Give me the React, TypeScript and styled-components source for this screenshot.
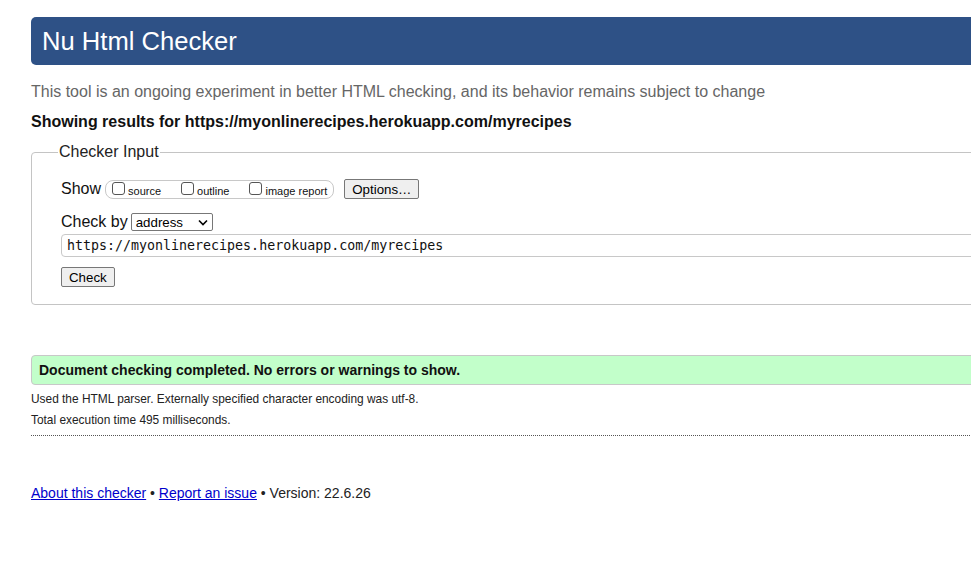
import React from "react";
import styled, { createGlobalStyle } from "styled-components";

const Global = createGlobalStyle`
  html, body { margin: 0; padding: 0; background: #fff; overflow: hidden; }
  body { font-family: "Liberation Sans", Arial, sans-serif; color: #000; }
`;

const Page = styled.div`
  width: 1140px;
  padding: 17px 0 0 31px;
  box-sizing: border-box;
`;

const Header = styled.h1`
  margin: 0;
  height: 48px;
  display: flex;
  align-items: center;
  padding: 0 11px;
  background: #2e5186;
  color: #fff;
  font-size: 25.6px;
  font-weight: normal;
  border-radius: 5px;
  box-sizing: border-box;
`;

const Intro = styled.p`
  margin: 18px 0 0;
  font-size: 16px;
  line-height: 18px;
  color: #666;
`;

const Results = styled.p`
  margin: 12px 0 0;
  font-size: 16px;
  line-height: 18px;
  font-weight: bold;
  color: #111;
`;

const Fieldset = styled.fieldset`
  margin: 12px 0 0;
  padding: 4px 29px 17px;
  border: 1px solid #c4c4c4;
  border-radius: 4px;
`;

const Legend = styled.legend`
  padding: 0 1px;
  margin-left: -3px;
  font-size: 16px;
  color: #222;
`;

const Row = styled.div<{ $mt: number }>`
  display: flex;
  align-items: center;
  gap: 4px;
  margin-top: ${(p) => p.$mt}px;
`;

const Label = styled.span`
  font-size: 16px;
  color: #111;
`;

const ChoiceBox = styled.div`
  display: flex;
  align-items: center;
  gap: 20px;
  height: 19px;
  padding: 0 6px 0 6px;
  border: 1px solid #c8c8c8;
  border-radius: 8px;
  box-sizing: border-box;
`;

const Choice = styled.label`
  display: flex;
  align-items: center;
  font-size: 11px;
  padding-top: 3px;
  color: #111;
`;

const Box = styled.span`
  width: 13px;
  height: 13px;
  border: 1px solid #555;
  border-radius: 3px;
  box-sizing: border-box;
  margin-right: 3px;
  margin-top: -5px;
  background: #fff;
`;

const Button = styled.button<{ $ml?: number }>`
  font-family: "Liberation Sans", Arial, sans-serif;
  font-size: 13.3px;
  height: 20px;
  padding: 0 7px;
  border: 1px solid #777;
  border-radius: 2px;
  background: #efefef;
  color: #000;
  margin-left: ${(p) => p.$ml ?? 0}px;
`;

const Select = styled.div`
  display: flex;
  align-items: center;
  justify-content: space-between;
  width: 82px;
  height: 18px;
  margin-left: -1px;
  padding: 0 4px 0 4px;
  border: 1px solid #777;
  border-radius: 2px;
  box-sizing: border-box;
  font-size: 13.3px;
  color: #000;
`;

const UrlInput = styled.div`
  margin-top: 3px;
  height: 23px;
  display: flex;
  align-items: center;
  padding-left: 5px;
  border: 1px solid #c8c8c8;
  border-radius: 4px;
  box-sizing: border-box;
  font-family: "DejaVu Sans Mono", monospace;
  font-size: 13.3px;
  color: #111;
`;

const Message = styled.div`
  margin-top: 50px;
  height: 30px;
  display: flex;
  align-items: center;
  padding-left: 7px;
  background: #c2ffca;
  border: 1px solid #c8c8c8;
  border-radius: 4px;
  box-sizing: border-box;
  font-size: 14px;
  font-weight: bold;
  color: #111;
`;

const Detail = styled.p<{ $mt: number }>`
  margin: ${(p) => p.$mt}px 0 0;
  font-size: 11.9px;
  line-height: 14px;
  color: #222;
`;

const Rule = styled.hr`
  margin: 8px 0 0;
  border: 0;
  border-top: 1px dotted #555;
`;

const Footer = styled.p`
  margin: 49px 0 0;
  font-size: 14px;
  color: #222;
  a { color: #00c; }
`;

export default function App() {
  return (
    <Page>
      <Global />
      <Header>Nu Html Checker</Header>
      <Intro>This tool is an ongoing experiment in better HTML checking, and its behavior remains subject to change</Intro>
      <Results>Showing results for https://myonlinerecipes.herokuapp.com/myrecipes</Results>
      <Fieldset>
        <Legend>Checker Input</Legend>
        <Row $mt={14}>
          <Label>Show</Label>
          <ChoiceBox>
            <Choice><Box />source</Choice>
            <Choice><Box />outline</Choice>
            <Choice><Box />image report</Choice>
          </ChoiceBox>
          <Button $ml={6}>Options…</Button>
        </Row>
        <Row $mt={14}>
          <Label>Check by</Label>
          <Select>
            <span>address</span>
            <svg width="10" height="7" viewBox="0 0 10 7">
              <path d="M1 1.5 L5 5.5 L9 1.5" fill="none" stroke="#000" strokeWidth="1.6" />
            </svg>
          </Select>
        </Row>
        <UrlInput>https://myonlinerecipes.herokuapp.com/myrecipes</UrlInput>
        <Row $mt={10}>
          <Button>Check</Button>
        </Row>
      </Fieldset>
      <Message>Document checking completed. No errors or warnings to show.</Message>
      <Detail $mt={7}>Used the HTML parser. Externally specified character encoding was utf-8.</Detail>
      <Detail $mt={7}>Total execution time 495 milliseconds.</Detail>
      <Rule />
      <Footer>
        <a href="#">About this checker</a> • <a href="#">Report an issue</a> • Version: 22.6.26
      </Footer>
    </Page>
  );
}
